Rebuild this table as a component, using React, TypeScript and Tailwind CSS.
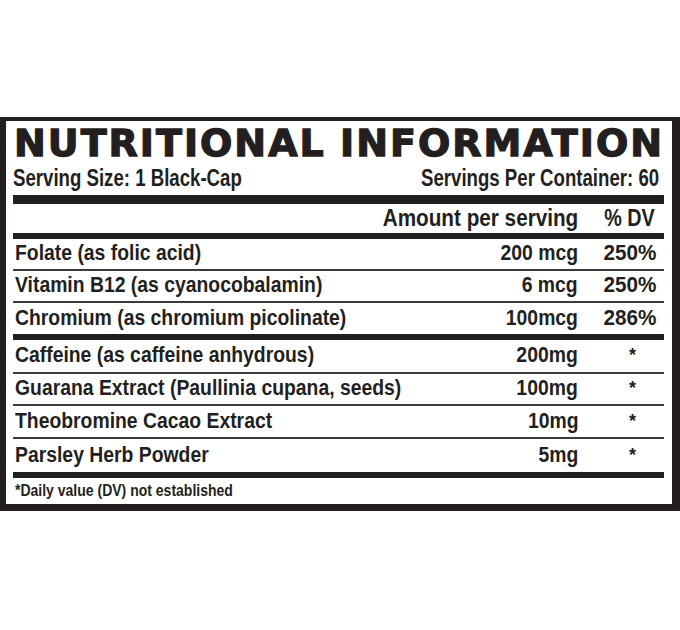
import React from "react";

const ink = "text-[#231f20]";

type Row = { name: string; amount: string; dv: string; h: string; after: "thin" | "thick" };

const rows: Row[] = [
  { name: "Folate (as folic acid)", amount: "200 mcg", dv: "250%", h: "h-[30px]", after: "thin" },
  { name: "Vitamin B12 (as cyanocobalamin)", amount: "6 mcg", dv: "250%", h: "h-[30px]", after: "thin" },
  { name: "Chromium (as chromium picolinate)", amount: "100mcg", dv: "286%", h: "h-[31px]", after: "thick" },
  { name: "Caffeine (as caffeine anhydrous)", amount: "200mg", dv: "*", h: "h-[32px]", after: "thin" },
  { name: "Guarana Extract (Paullinia cupana, seeds)", amount: "100mg", dv: "*", h: "h-[30px]", after: "thin" },
  { name: "Theobromine Cacao Extract", amount: "10mg", dv: "*", h: "h-[31px]", after: "thin" },
  { name: "Parsley Herb Powder", amount: "5mg", dv: "*", h: "h-[33px]", after: "thick" },
];

const narrow = "font-['Liberation_Sans',Arial,sans-serif] font-bold";

export default function App() {
  return (
    <div className="w-[680px] h-[630px] bg-white pt-[117px]">
      <div className="w-[680px] h-[394px] border-[#231f20] border-t-[4px] border-l-[6px] border-r-[8px] border-b-[7px] bg-white pl-[7px] pr-[8px]">
        {/* Title */}
        <div
          className={`flex justify-between h-[44px] items-end pb-[3px] ${ink} font-['DejaVu_Sans',sans-serif] font-bold text-[38px] leading-none tracking-[2px] [-webkit-text-stroke:1.3px_#231f20]`}
        >
          <span className="pl-[1px]">NUTRITIONAL</span>
          <span>INFORMATION</span>
        </div>
        {/* Serving line */}
        <div className={`flex justify-between h-[26px] items-center ${ink} ${narrow} text-[23px] leading-none`}>
          <span className="inline-block whitespace-nowrap origin-left scale-x-[0.81]">Serving Size: 1 Black-Cap</span>
          <span className="inline-block whitespace-nowrap origin-right scale-x-[0.81] pr-[6px]">Servings Per Container: 60</span>
        </div>
        <div className="h-[4px]" />
        <div className="h-[9px] bg-[#231f20]" />
        {/* Header */}
        <div className={`flex h-[29px] items-center ${ink} ${narrow} text-[23px] leading-none`}>
          <div className="flex-1" />
          <div className="text-right">
            <span className="inline-block whitespace-nowrap origin-right scale-x-[0.9]">Amount per serving</span>
          </div>
          <div className="w-[86px] text-right pr-[9px]">
            <span className="inline-block whitespace-nowrap origin-right scale-x-[0.86]">% DV</span>
          </div>
        </div>
        <div className="h-[6px] bg-[#231f20]" />
        {rows.map((r) => (
          <React.Fragment key={r.name}>
            <div className={`flex ${r.h} items-center pb-[2px] ${ink} ${narrow} text-[22px] leading-none`}>
              <div className="flex-1 pl-[2px] min-w-0">
                <span className="inline-block whitespace-nowrap origin-left scale-x-[0.88]">{r.name}</span>
              </div>
              <div className="text-right">
                <span className="inline-block whitespace-nowrap origin-right scale-x-[0.88]">{r.amount}</span>
              </div>
              {r.dv === "*" ? (
                <div className="w-[86px] text-right pr-[28px] text-[18px]">*</div>
              ) : (
                <div className="w-[86px] text-right pr-[8px]">
                  <span className="inline-block whitespace-nowrap origin-right scale-x-[0.94]">{r.dv}</span>
                </div>
              )}
            </div>
            {r.after === "thin" ? (
              <div className="h-[2px] bg-[#3a3a3a]" />
            ) : (
              <div className="h-[6px] bg-[#231f20]" />
            )}
          </React.Fragment>
        ))}
        <div className={`flex h-[25px] items-center pl-[2px] ${ink} ${narrow} text-[16px] leading-none`}>
          <span className="inline-block whitespace-nowrap origin-left scale-x-[0.875]">*Daily value (DV) not established</span>
        </div>
      </div>
    </div>
  );
}
